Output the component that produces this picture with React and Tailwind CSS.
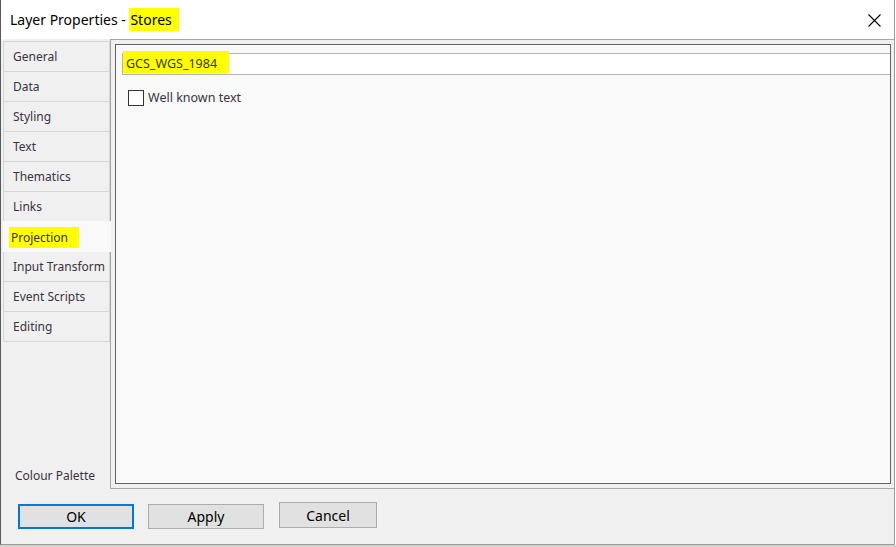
import React from 'react';

const tabs = ['General', 'Data', 'Styling', 'Text', 'Thematics', 'Links', 'Projection', 'Input Transform', 'Event Scripts', 'Editing'];

const ui = { fontFamily: '"Noto Sans", "Open Sans", sans-serif' };

const Tab = ({ label, active }) => {
  if (active) {
    return (
      <div className="h-[31px] -mt-[1px] -mr-[1px] bg-[#f9f9f9] flex items-center pl-[6px] pt-[2px] relative z-10">
        <span className="bg-[#ffff00] text-[12px] text-[#3a3340] h-[21px] w-[70px] flex items-center pl-[2px]">{label}</span>
      </div>
    );
  }
  return (
    <div className="h-[31px] border border-[#d6d6d6] -mt-[1px] first:mt-0 bg-[#f0f0f0] flex items-center pl-[9px] text-[12px] text-[#3a3340] whitespace-nowrap">
      {label}
    </div>
  );
};

const App = () => {
  return (
    <div className="w-[896px] h-[547px] bg-white flex flex-col" style={ui}>
      <div className="w-[895px] h-[545px] border-l border-[#5a5a5a] border-r border-r-[#9a9a9a] border-b border-b-[#9a9a9a] bg-[#f0f0f0] flex flex-col">
        {/* title bar */}
        <div className="h-[39px] bg-white flex items-center justify-between pl-[9px] pr-[13px] shrink-0">
          <div className="text-[14px] text-black flex items-center">
            <span>Layer Properties -&nbsp;</span>
            <span className="bg-[#ffff00] px-[1px] h-[23px] w-[50px] flex items-center">Stores</span>
          </div>
          <svg width="13" height="13" viewBox="0 0 13 13" className="mt-[1px]">
            <path d="M0.5 0.5 L12.5 12.5 M12.5 0.5 L0.5 12.5" stroke="#000" strokeWidth="1.1" fill="none" />
          </svg>
        </div>

        {/* body */}
        <div className="flex h-[450px] shrink-0">
          <div className="w-[109px] pl-[2px] pt-[2px] flex flex-col">
            {tabs.map((t) => (
              <Tab key={t} label={t} active={t === 'Projection'} />
            ))}
            <div className="mt-auto mb-[4px] pl-[12px] text-[12px] text-[#3a3340]">Colour Palette</div>
          </div>
          <div className="flex-1 border border-[#a6a6a6] border-r-0 p-[4px] pr-[3px]">
            <div className="h-full border border-[#646464] bg-[#f9f9f9] pl-[6px] pt-[8px] overflow-hidden">
              <div className="h-[22px] bg-white border border-[#b4b4b4] border-r-0 flex items-center">
                <span className="bg-[#ffff00] h-[22px] w-[106px] -mt-[4px] flex items-center pl-[3px] pt-[4px] text-[12.5px] text-[#3a3a20]">GCS_WGS_1984</span>
              </div>
              <label className="flex items-center mt-[14px] ml-[6px] gap-[4px]">
                <span className="w-[16px] h-[16px] border border-[#333] bg-white inline-block" />
                <span className="text-[12.5px] text-[#3a3340]">Well known text</span>
              </label>
            </div>
          </div>
        </div>

        {/* buttons */}
        <div className="flex items-start pl-[17px] pt-[15px]">
          <button className="w-[116px] h-[25px] border-2 border-[#0078d7] bg-[#e1e1e1] text-[14px] text-black">OK</button>
          <button className="ml-[14px] w-[116px] h-[25px] border border-[#adadad] bg-[#e1e1e1] text-[14px] text-black">Apply</button>
          <button className="ml-[15px] -mt-[2px] w-[98px] h-[26px] border border-[#adadad] bg-[#e1e1e1] text-[14px] text-black">Cancel</button>
        </div>
      </div>
      <div className="h-[2px] bg-[#d4d4cc]" />
    </div>
  );
};

export default App;
